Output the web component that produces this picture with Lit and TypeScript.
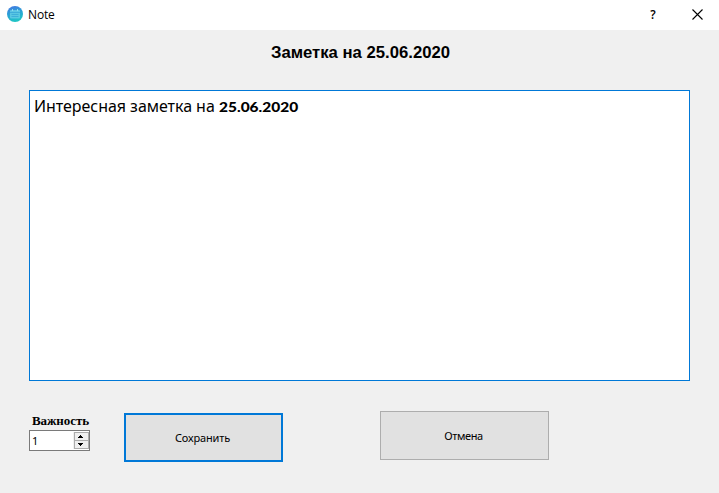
import { LitElement, html, css } from "lit";
import { customElement, property, state } from "lit/decorators.js";

@customElement("title-bar")
class TitleBar extends LitElement {
  @property() label = "";
  static styles = css`
    :host { display: flex; align-items: center; height: 30px; background: #fff; color: #000; box-sizing: border-box; padding-left: 7px; }
    svg { display: block; }
    .logo { margin-bottom: 2px; }
    .name { flex: 1; margin-left: 5px; font: 12px/16px "Open Sans", sans-serif; letter-spacing: -0.15px; }
    .tool { height: 30px; display: flex; align-items: center; justify-content: center; font: 600 12px/16px "Open Sans", sans-serif; box-sizing: border-box; padding-bottom: 2px; }
    .help { width: 46px; padding-bottom: 1px; }
    .close { width: 43px; }
  `;
  render() {
    return html`
      <svg class="logo" width="16" height="16" viewBox="0 0 16 16">
        <defs><linearGradient id="g" x1="0" y1="0" x2="0.3" y2="1"><stop offset="0" stop-color="#4773e4"/><stop offset=".5" stop-color="#2b9fd6"/><stop offset="1" stop-color="#20c3c5"/></linearGradient></defs>
        <circle cx="8" cy="8" r="8" fill="url(#g)"/>
        <rect x="3" y="4" width="10" height="8.5" rx="1" fill="#66cfe6" opacity=".8"/>
        <path d="M5.5 3v2M10.5 3v2" stroke="#8edcf0" stroke-width="1"/>
        <path d="M3 6.5h10M4.5 8.5h7M4.5 10.5h7" stroke="#2c9cd6" stroke-width=".8" opacity=".7"/>
      </svg>
      <span class="name">${this.label}</span>
      <span class="tool help">?</span>
      <span class="tool close"><svg width="11" height="11" viewBox="0 0 11 11"><path d="M.5 .5l10 10M10.5 .5l-10 10" stroke="#000" stroke-width="1.1"/></svg></span>
    `;
  }
}

@customElement("spin-box")
class SpinBox extends LitElement {
  @property({ type: Number }) value = 1;
  static styles = css`
    :host { display: flex; width: 61px; height: 21px; box-sizing: border-box; border: 1px solid #7a7a7a; background: #fff; padding: 1px 0 1px 1px; }
    .value { flex: 1; padding-left: 1px; font: 11px/18px "Noto Sans", sans-serif; }
    .steps { width: 16px; box-sizing: border-box; padding-left: 1px; background: #f0f0f0; display: flex; flex-direction: column; }
    .step { flex: 1; box-sizing: border-box; border: 1px solid #acacac; background: #efefef; display: flex; align-items: center; justify-content: center; padding-right: 2px; }
    .step + .step { margin-top: -1px; }
    svg { display: block; }
  `;
  render() {
    return html`<span class="value">${this.value}</span>
      <div class="steps">
        <div class="step"><svg width="5" height="3" shape-rendering="crispEdges"><path d="M2 0h1v1h1v1h1v1H0V2h1V1h1z"/></svg></div>
        <div class="step"><svg width="5" height="3" shape-rendering="crispEdges"><path d="M0 0h5v1H4v1H3v1H2V2H1V1H0z"/></svg></div>
      </div>`;
  }
}

@customElement("app-root")
class AppRoot extends LitElement {
  @state() date = "25.06.2020";
  static styles = css`
    :host { display: flex; flex-direction: column; height: 493px; background: #f0f0f0; color: #000; overflow: hidden; }
    h1 { margin: 13px 0 0; padding-left: 2px; height: 20px; font: bold 16.7px/20px "Liberation Sans", Arial, sans-serif; text-align: center; }
    .editor { box-sizing: border-box; height: 291px; margin: 27px 29px 0; background: #fff; border: 1px solid #0078d7; padding: 4px; font: 16px/22px "Noto Sans", sans-serif; white-space: nowrap; }
    .text { letter-spacing: -0.04px; }
    .date { display: inline-block; font: 900 13px/22px Lato, sans-serif; transform: scaleX(1.19); transform-origin: left; }
    .footer { display: flex; align-items: flex-start; padding: 30px 0 0 29px; }
    .priority { width: 61px; }
    .caption { display: block; height: 19px; padding-left: 2px; text-align: center; font: bold 13px/19px "Liberation Serif", serif; letter-spacing: -0.05px; white-space: nowrap; }
    .btn { box-sizing: border-box; height: 49px; display: flex; align-items: center; justify-content: center; background: #e1e1e1; font: 11px/15px "Noto Sans", sans-serif; }
    .save { width: 159px; margin: 2px 0 0 34px; border: 2px solid #0078d7; padding-right: 2px; letter-spacing: -0.15px; }
    .cancel { width: 169px; margin-left: 97px; border: 1px solid #adadad; padding-right: 2px; letter-spacing: -0.4px; }
  `;
  render() {
    return html`
      <title-bar label="Note"></title-bar>
      <h1>Заметка на ${this.date}</h1>
      <div class="editor"><span class="text">Интересная заметка на </span><span class="date">${this.date}</span></div>
      <div class="footer">
        <div class="priority"><span class="caption">Важность</span><spin-box .value=${1}></spin-box></div>
        <div class="btn save" role="button">Сохранить</div>
        <div class="btn cancel" role="button">Отмена</div>
      </div>
    `;
  }
}
